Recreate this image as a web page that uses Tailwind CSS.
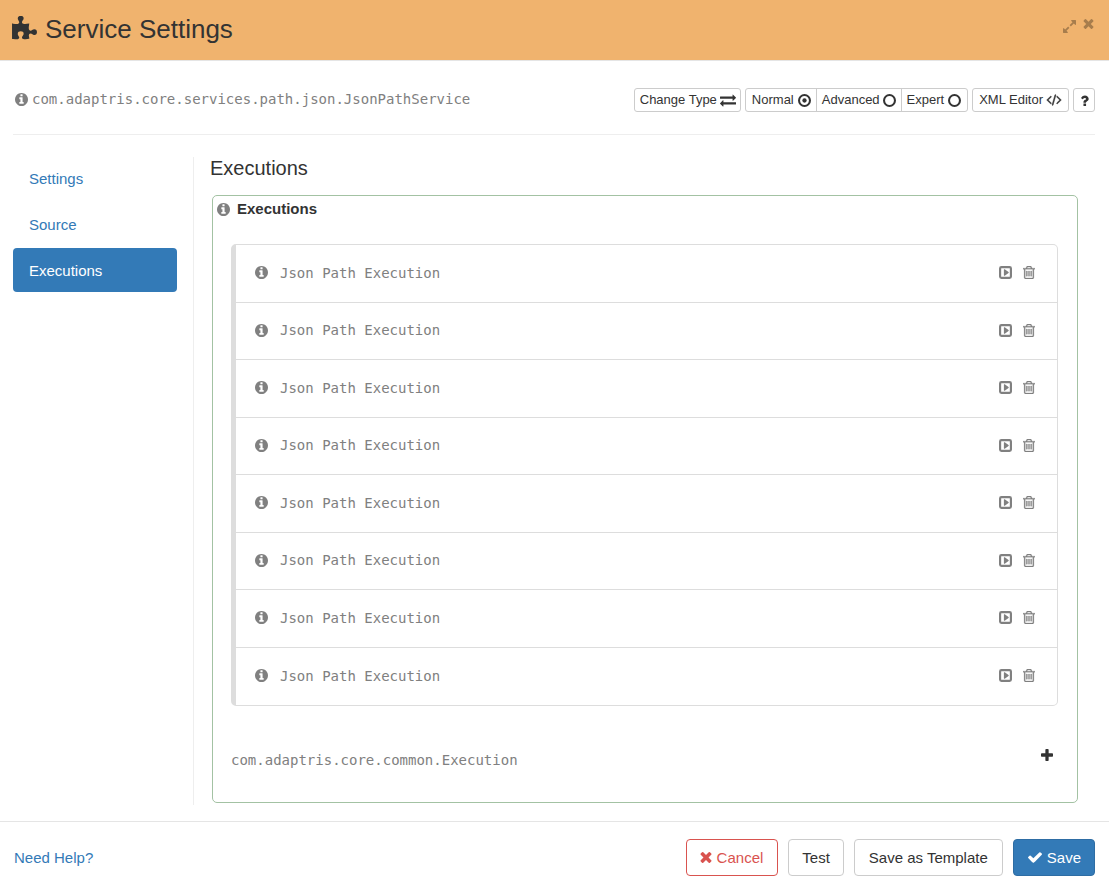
<!DOCTYPE html>
<html lang="en">
<head>
<meta charset="utf-8">
<title>Service Settings</title>
<script src="https://cdn.jsdelivr.net/npm/@tailwindcss/browser@4"></script>
</head>
<body class="flex min-h-screen flex-col bg-white font-['Liberation_Sans',Arial,sans-serif] text-[15px] text-[#333]">

<svg class="hidden" aria-hidden="true">
  <symbol id="info" viewBox="128 128 1536 1536"><path d="M1152 1376v-160q0-14-9-23t-23-9h-96v-512q0-14-9-23t-23-9h-320q-14 0-23 9t-9 23v160q0 14 9 23t23 9h96v320h-96q-14 0-23 9t-9 23v160q0 14 9 23t23 9h448q14 0 23-9t9-23zm-128-896v-160q0-14-9-23t-23-9h-192q-14 0-23 9t-9 23v160q0 14 9 23t23 9h192q14 0 23-9t9-23zm640 416q0 209-103 385.5t-279.5 279.5-385.5 103-385.5-103-279.5-279.5-103-385.5 103-385.5 279.5-279.5 385.5-103 385.5 103 279.5 279.5 103 385.5z"/></symbol>
  <symbol id="times" viewBox="302 366 1188 1188"><path d="M1490 1322q0 40-28 68l-136 136q-28 28-68 28t-68-28l-294-294-294 294q-28 28-68 28t-68-28l-136-136q-28-28-28-68t28-68l294-294-294-294q-28-28-28-68t28-68l136-136q28-28 68-28t68 28l294 294 294-294q28-28 68-28t68 28l136 136q28 28 28 68t-28 68l-294 294 294 294q28 28 28 68z"/></symbol>
  <symbol id="play" viewBox="128 128 1536 1536"><rect x="256" y="256" width="1280" height="1280" rx="160" fill="none" stroke="currentColor" stroke-width="256"/><path d="M1280 896q0 33-27 52l-448 320q-31 23-66 4-34-17-34-57v-640q0-40 34-57 35-18 66 5l448 320q27 20 27 53z"/></symbol>
  <symbol id="trash" viewBox="192 128 1408 1536"><path stroke="currentColor" stroke-width="30" d="M704 736v576q0 14-9 23t-23 9h-64q-14 0-23-9t-9-23v-576q0-14 9-23t23-9h64q14 0 23 9t9 23zm256 0v576q0 14-9 23t-23 9h-64q-14 0-23-9t-9-23v-576q0-14 9-23t23-9h64q14 0 23 9t9 23zm256 0v576q0 14-9 23t-23 9h-64q-14 0-23-9t-9-23v-576q0-14 9-23t23-9h64q14 0 23 9t9 23zm128 724v-948h-896v948q0 22 7 40.5t14.5 27 10.5 8.5h832q3 0 10.5-8.5t14.5-27 7-40.5zm-672-1076h448l-48-117q-7-9-17-11h-317q-10 2-17 11zm928 32v64q0 14-9 23t-23 9h-96v948q0 83-47 143.5t-113 60.5h-832q-66 0-113-58.5t-47-141.5v-952h-96q-14 0-23-9t-9-23v-64q0-14 9-23t23-9h309l70-167q15-37 54-63t79-26h320q40 0 79 26t54 63l70 167h309q14 0 23 9t9 23z"/></symbol>
  <symbol id="ring" viewBox="128 128 1536 1536"><circle cx="896" cy="896" r="646" fill="none" stroke="currentColor" stroke-width="244"/></symbol>
</svg>

<header class="flex h-[61px] items-start justify-between border-b border-[#e5e5e5] bg-[#f0b36e] pl-3 pr-[15px]">
  <h1 class="flex items-center gap-2 pt-[11px] text-[26px] leading-9">
    <svg class="-mt-0.5 h-6 w-[25px] fill-current" viewBox="91 0 1664 1600" aria-hidden="true"><path d="M1755 1083q0 81-44.5 135t-123.5 54q-41 0-77.5-17.5t-59-38-56.5-38-71-17.5q-110 0-110 124 0 39 16 115t15 115v5q-22 0-33 1-34 3-97.5 11.5t-115.5 13.5-98 5q-61 0-103-26.5t-42-83.5q0-37 17.5-71t38-56.5 38-59 17.5-77.5q0-79-54-123.5t-135-44.5q-84 0-143 45.5t-59 127.5q0 43 15 83t33.5 64.5 33.5 53 15 50.5q0 45-46 89-37 35-117 35-95 0-245-24-9-2-27.5-4t-27.5-4l-13-2q-1 0-3-1-2 0-2-1v-1024q2 1 17.5 3.5t34 5 21.5 3.5q150 24 245 24 80 0 117-35 46-44 46-89 0-22-15-50.5t-33.5-53-33.5-64.5-15-83q0-82 59-127.5t144-45.5q80 0 134 44.5t54 123.5q0 41-17.5 77.5t-38 59-38 56.5-17.5 71q0 57 42 83.5t103 26.5q64 0 180-15t163-17v2q-1 2-3.5 17.5t-5 34-3.5 21.5q-24 150-24 245 0 80 35 117 44 46 89 46 22 0 50.5-15t53-33.5 64.5-33.5 83-15q82 0 127.5 59t45.5 143z"/></svg>
    Service Settings
  </h1>
  <div class="flex gap-[7px] pt-[19px] text-black/30">
    <button type="button" aria-label="Expand" class="pt-px"><svg class="h-[13px] w-[13px] fill-current" viewBox="128 128 1536 1536"><path d="M883 1056q0 13-10 23l-332 332 144 144q19 19 19 45t-19 45-45 19h-448q-26 0-45-19t-19-45v-448q0-26 19-45t45-19 45 19l144 144 332-332q10-10 23-10t23 10l114 114q10 10 10 23zm781-864v448q0 26-19 45t-45 19-45-19l-144-144-332 332q-10 10-23 10t-23-10l-114-114q-10-10-10-23t10-23l332-332-144-144q-19-19-19-45t19-45 45-19h448q26 0 45 19t19 45z"/></svg></button>
    <button type="button" aria-label="Close" class="self-start"><svg class="h-[10px] w-[11px] fill-current"><use href="#times"/></svg></button>
  </div>
</header>

<main class="flex flex-1 flex-col pb-4 pl-[13px] pr-3.5">
  <div class="flex items-center justify-between border-b border-[#eee] pt-[27px] pb-[22px]">
    <p class="flex items-center gap-1 pb-0.5 pl-0.5 font-['DejaVu_Sans_Mono',monospace] text-sm text-[#808080]">
      <svg class="h-[13px] w-[13px] fill-current" aria-hidden="true"><use href="#info"/></svg>com.adaptris.core.services.path.json.JsonPathService
    </p>
    <div class="flex gap-1 text-[13px] leading-[22px]">
      <button type="button" class="flex items-center gap-[3px] rounded-[3px] border border-[#ccc] pl-[5px] pr-1">Change Type
        <svg class="h-4 w-4 fill-current" viewBox="0 0 1792 1792" aria-hidden="true"><path d="M1792 1184v192q0 13-9.5 22.5t-22.5 9.5h-1376v192q0 13-9.5 22.5t-22.5 9.5q-12 0-24-10l-319-320q-9-9-9-22 0-14 9-23l320-320q9-9 23-9 13 0 22.5 9.5t9.5 22.5v192h1376q13 0 22.5 9.5t9.5 22.5zm0-544q0 14-9 23l-320 320q-9 9-23 9-13 0-22.5-9.5t-9.5-22.5v-192h-1376q-13 0-22.5-9.5t-9.5-22.5v-192q0-13 9.5-22.5t22.5-9.5h1376v-192q0-14 9-23t23-9q12 0 24 10l319 319q9 9 9 23z"/></svg></button>
      <div class="flex divide-x divide-[#ccc] rounded-[3px] border border-[#ccc]">
        <button type="button" class="flex items-center gap-1 pl-1.5 pr-[5px]">Normal
          <svg class="h-[13px] w-[13px] fill-current" viewBox="128 128 1536 1536" aria-hidden="true"><circle cx="896" cy="896" r="646" fill="none" stroke="currentColor" stroke-width="244"/><circle cx="896" cy="896" r="256"/></svg></button>
        <button type="button" class="flex items-center gap-[3px] pl-[5px] pr-[5px]">Advanced
          <svg class="h-[13px] w-[13px]" aria-hidden="true"><use href="#ring"/></svg></button>
        <button type="button" class="flex items-center gap-1 pl-[5px] pr-[6px]">Expert
          <svg class="h-[13px] w-[13px]" aria-hidden="true"><use href="#ring"/></svg></button>
      </div>
      <button type="button" class="flex items-center gap-[3px] rounded-[3px] border border-[#ccc] pl-[6px] pr-[6px]">XML Editor
        <svg class="h-[14px] w-4 fill-current stroke-current" stroke-width="70" viewBox="64 64 1920 1792" aria-hidden="true"><path d="M681 1399l-50 50q-10 10-23 10t-23-10l-466-466q-10-10-10-23t10-23l466-466q10-10 23-10t23 10l50 50q10 10 10 23t-10 23l-393 393 393 393q10 10 10 23t-10 23zm591-1067l-373 1291q-4 13-15.5 19.5t-23.5 2.5l-62-17q-13-4-19.5-15.5t-2.5-24.5l373-1291q4-13 15.5-19.5t23.5-2.5l62 17q13 4 19.5 15.5t2.5 24.5zm657 651l-466 466q-10 10-23 10t-23-10l-50-50q-10-10-10-23t10-23l393-393-393-393q-10-10-10-23t10-23l50-50q10-10 23-10t23 10l466 466q10 10 10 23t-10 23z"/></svg></button>
      <button type="button" aria-label="Help" class="flex w-[22px] items-center justify-center rounded-[3px] border border-[#ccc]"><svg class="h-[11px] w-[9px] fill-current" viewBox="384 190 1024 1346"><path d="M1088 1256v240q0 16-12 28t-28 12h-240q-16 0-28-12t-12-28v-240q0-16 12-28t28-12h240q16 0 28 12t12 28zm316-600q0 54-15.5 101t-35 76.5-55 59.5-57.5 43.5-61 35.5q-41 23-68.5 65t-27.5 67q0 17-12 32.5t-28 15.5h-240q-15 0-25.5-18.5t-10.5-37.5v-45q0-83 65-156.5t143-108.5q59-27 84-56t25-76q0-42-46.5-74t-107.5-32q-65 0-108 29-35 25-107 115-13 16-31 16-12 0-25-8l-164-125q-13-10-15.5-25t5.5-28q160-266 464-266 80 0 161 31t146 83 106 127.5 41 158.5z"/></svg></button>
    </div>
  </div>

  <div class="flex flex-1 pt-[22px]">
    <nav class="flex w-[181px] shrink-0 flex-col gap-0.5 border-r border-[#eee] pr-4 leading-5 text-[#337ab7]">
      <a href="#settings" class="-mt-px rounded px-4 pt-[13px] pb-[11px]">Settings</a>
      <a href="#source" class="rounded px-4 pt-[13px] pb-[11px]">Source</a>
      <a href="#executions" aria-current="page" class="rounded bg-[#337ab7] px-4 pt-[13px] pb-[11px] text-white">Executions</a>
    </nav>

    <section class="flex-1 pl-4 pr-[17px] pb-px">
      <h2 class="text-xl leading-[22px]">Executions</h2>
      <div class="ml-0.5 mt-4 rounded-[5px] border border-[#a3c2a3] pl-[18px] pr-[19px] pb-8">
        <h3 class="-ml-3.5 flex items-center gap-[7px] pt-1 font-bold leading-[18px]">
          <svg class="h-[13px] w-[13px] fill-[#808080]" aria-hidden="true"><use href="#info"/></svg>Executions
        </h3>
        <ul id="list" class="mt-[26px] grid h-[462px] auto-rows-fr divide-y divide-[#ddd] rounded-[5px] border border-l-[5px] border-[#ddd] font-['DejaVu_Sans_Mono',monospace] text-sm text-[#808080]"></ul>
        <div class="flex items-start justify-between pt-[43px] pr-[5px]">
          <p class="pt-px font-['DejaVu_Sans_Mono',monospace] text-sm leading-5 text-[#808080]">com.adaptris.core.common.Execution</p>
          <button type="button" aria-label="Add execution"><svg class="h-3 w-3 fill-current" viewBox="192 128 1408 1408"><path d="M1600 736v192q0 40-28 68t-68 28h-416v416q0 40-28 68t-68 28h-192q-40 0-68-28t-28-68v-416h-416q-40 0-68-28t-28-68v-192q0-40 28-68t68-28h416v-416q0-40 28-68t68-28h192q40 0 68 28t28 68v416h416q40 0 68 28t28 68z"/></svg></button>
        </div>
      </div>
    </section>
  </div>
</main>

<footer class="flex items-center justify-between border-t border-[#e5e5e5] px-3.5 pt-[17px] pb-1.5">
  <a href="#help" class="pt-0.5 text-[#337ab7]">Need Help?</a>
  <div class="flex gap-2.5 leading-[35px]">
    <button type="button" class="flex items-center gap-[5px] rounded border border-[#d9534f] pl-[13px] pr-3.5 text-[#d9534f]"><svg class="h-[11px] w-3 fill-current" aria-hidden="true"><use href="#times"/></svg>Cancel</button>
    <button type="button" class="rounded border border-[#ccc] px-[13px]">Test</button>
    <button type="button" class="rounded border border-[#ccc] px-3.5">Save as Template</button>
    <button type="button" class="flex items-center gap-[5px] rounded border border-[#2e6da4] bg-[#337ab7] pl-3.5 pr-[13px] text-white"><svg class="h-[11px] w-[14px] fill-current" viewBox="121 334 1550 1188" aria-hidden="true"><path d="M1671 566q0 40-28 68l-724 724-136 136q-28 28-68 28t-68-28l-136-136-362-362q-28-28-28-68t28-68l136-136q28-28 68-28t68 28l294 295 656-657q28-28 68-28t68 28l136 136q28 28 28 68z"/></svg>Save</button>
  </div>
</footer>

<script>
  const row = `<li class="flex items-center justify-between pb-px pl-[19px] pr-[22px]">
    <span class="flex items-center gap-3"><svg class="h-[13px] w-[13px] fill-current" aria-hidden="true"><use href="#info"/></svg>Json Path Execution</span>
    <span class="flex items-center gap-[11px]">
      <button type="button" aria-label="Open"><svg class="h-[13px] w-[13px] fill-current"><use href="#play"/></svg></button>
      <button type="button" aria-label="Delete"><svg class="h-[13px] w-3 fill-current"><use href="#trash"/></svg></button>
    </span></li>`;
  document.getElementById('list').innerHTML = row.repeat(8);
</script>
</body>
</html>
